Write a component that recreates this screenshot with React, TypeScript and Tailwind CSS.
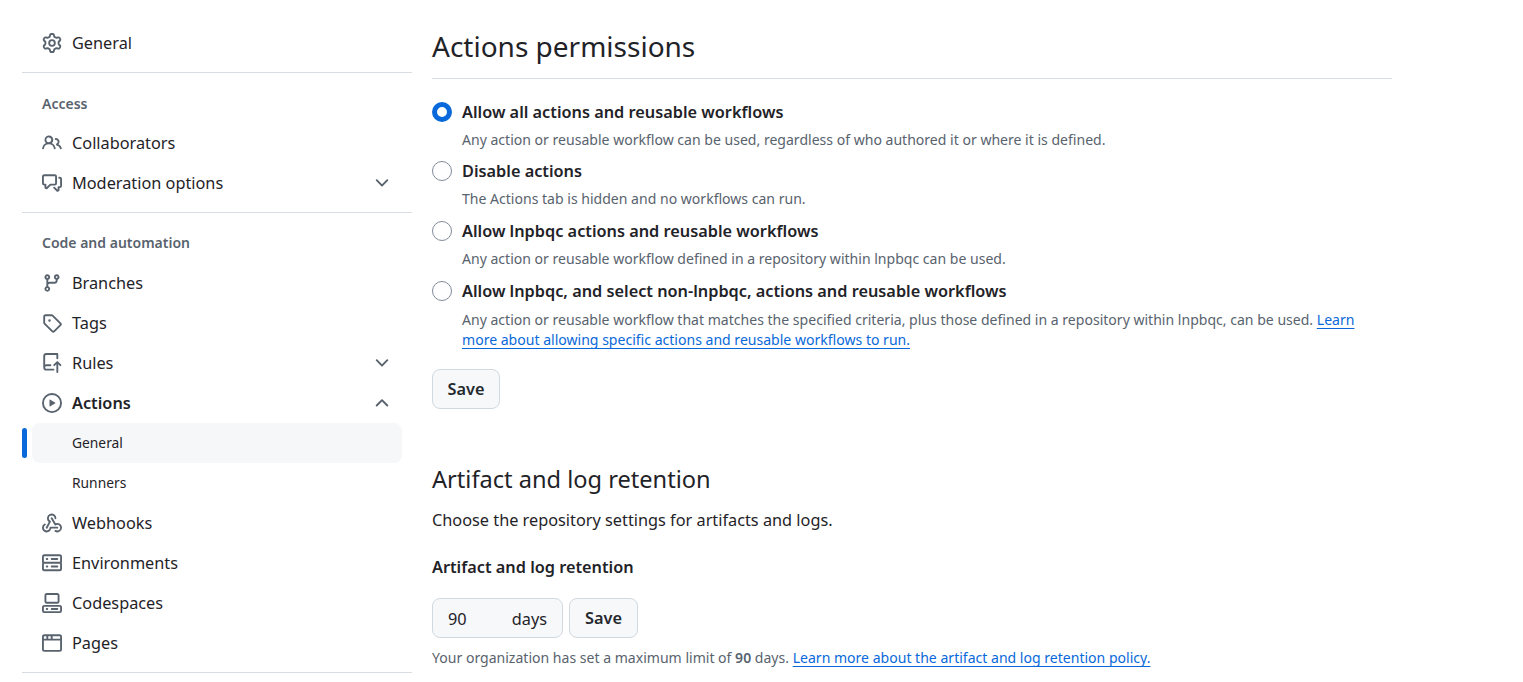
import type { ReactNode } from "react";

// octicons, 16px grid drawn at 20px
const icons = {
  gear: "M8 0a8.2 8.2 0 0 1 .701.031C9.444.095 9.99.645 10.16 1.29l.288 1.107c.018.066.079.158.212.224.231.114.454.243.668.386.123.082.233.09.299.071l1.103-.303c.644-.176 1.392.021 1.82.63.27.385.506.792.704 1.218.315.675.111 1.422-.364 1.891l-.814.806c-.049.048-.098.147-.088.294.016.257.016.515 0 .772-.01.147.038.246.088.294l.814.806c.475.469.679 1.216.364 1.891a7.977 7.977 0 0 1-.704 1.217c-.428.61-1.176.807-1.82.63l-1.102-.302c-.067-.019-.177-.011-.3.071a5.909 5.909 0 0 1-.668.386c-.133.066-.194.158-.211.224l-.29 1.106c-.168.646-.715 1.196-1.458 1.26a8.006 8.006 0 0 1-1.402 0c-.743-.064-1.289-.614-1.458-1.26l-.289-1.106c-.018-.066-.079-.158-.212-.224a5.738 5.738 0 0 1-.668-.386c-.123-.082-.233-.09-.299-.071l-1.103.303c-.644.176-1.392-.021-1.82-.63a8.12 8.12 0 0 1-.704-1.218c-.315-.675-.111-1.422.363-1.891l.815-.806c.05-.048.098-.147.088-.294a6.214 6.214 0 0 1 0-.772c.01-.147-.038-.246-.088-.294l-.815-.806C.635 6.045.431 5.298.746 4.623a7.92 7.92 0 0 1 .704-1.217c.428-.61 1.176-.807 1.82-.63l1.102.302c.067.019.177.011.3-.071.214-.143.437-.272.668-.386.133-.066.194-.158.211-.224l.29-1.106C6.009.645 6.556.095 7.299.03 7.53.01 7.764 0 8 0Zm-.571 1.525c-.036.003-.108.036-.137.146l-.289 1.105c-.147.561-.549.967-.998 1.189-.173.086-.34.183-.5.29-.417.278-.97.423-1.529.27l-1.103-.303c-.109-.03-.175.016-.195.045-.22.312-.412.644-.573.99-.014.031-.021.11.059.19l.815.806c.411.406.562.957.53 1.456a4.709 4.709 0 0 0 0 .582c.032.499-.119 1.05-.53 1.456l-.815.806c-.081.08-.073.159-.059.19.162.346.353.677.573.989.02.03.085.076.195.046l1.102-.303c.56-.153 1.113-.008 1.53.27.161.107.328.204.501.29.447.222.85.629.997 1.189l.289 1.105c.029.109.101.143.137.146a6.6 6.6 0 0 0 1.142 0c.036-.003.108-.036.137-.146l.289-1.105c.147-.561.549-.967.998-1.189.173-.086.34-.183.5-.29.417-.278.97-.423 1.529-.27l1.103.303c.109.029.175-.016.195-.045.22-.313.411-.644.573-.99.014-.031.021-.11-.059-.19l-.815-.806c-.411-.406-.562-.957-.53-1.456a4.709 4.709 0 0 0 0-.582c-.032-.499.119-1.05.53-1.456l.815-.806c.081-.08.073-.159.059-.19a6.464 6.464 0 0 0-.573-.989c-.02-.03-.085-.076-.195-.046l-1.102.303c-.56.153-1.113.008-1.53-.27a4.44 4.44 0 0 0-.501-.29c-.447-.222-.85-.629-.997-1.189l-.289-1.105c-.029-.11-.101-.143-.137-.146a6.6 6.6 0 0 0-1.142 0ZM11 8a3 3 0 1 1-6 0 3 3 0 0 1 6 0ZM9.5 8a1.5 1.5 0 1 0-3.001.001A1.5 1.5 0 0 0 9.5 8Z",
  people: "M2 5.5a3.5 3.5 0 1 1 5.898 2.549 5.508 5.508 0 0 1 3.034 4.084.75.75 0 1 1-1.482.235 4 4 0 0 0-7.9 0 .75.75 0 0 1-1.482-.236A5.507 5.507 0 0 1 3.102 8.05 3.493 3.493 0 0 1 2 5.5ZM11 4a3.001 3.001 0 0 1 2.22 5.018 5.01 5.01 0 0 1 2.56 3.012.749.749 0 0 1-.885.954.752.752 0 0 1-.549-.514 3.507 3.507 0 0 0-2.522-2.372.75.75 0 0 1-.574-.73v-.352a.75.75 0 0 1 .416-.672A1.5 1.5 0 0 0 11 5.5.75.75 0 0 1 11 4Zm-5.5-.5a2 2 0 1 0-.001 3.999A2 2 0 0 0 5.5 3.5Z",
  discussion: "M1.75 1h8.5c.966 0 1.75.784 1.75 1.75v5.5A1.75 1.75 0 0 1 10.25 10H7.061l-2.574 2.573A1.458 1.458 0 0 1 2 11.543V10h-.25A1.75 1.75 0 0 1 0 8.25v-5.5C0 1.784.784 1 1.75 1ZM1.5 2.75v5.5c0 .138.112.25.25.25h1a.75.75 0 0 1 .75.75v2.19l2.72-2.72a.749.749 0 0 1 .53-.22h3.5a.25.25 0 0 0 .25-.25v-5.5a.25.25 0 0 0-.25-.25h-8.5a.25.25 0 0 0-.25.25Zm13 2a.25.25 0 0 0-.25-.25h-.5a.75.75 0 0 1 0-1.5h.5c.966 0 1.75.784 1.75 1.75v5.5A1.75 1.75 0 0 1 14.25 12H14v1.543a1.458 1.458 0 0 1-2.487 1.03L9.22 12.28a.749.749 0 0 1 .326-1.275.749.749 0 0 1 .734.215l2.22 2.22v-2.19a.75.75 0 0 1 .75-.75h1a.25.25 0 0 0 .25-.25Z",
  branch: "M9.5 3.25a2.25 2.25 0 1 1 3 2.122V6A2.5 2.5 0 0 1 10 8.5H6a1 1 0 0 0-1 1v1.128a2.251 2.251 0 1 1-1.5 0V5.372a2.25 2.25 0 1 1 1.5 0v1.836A2.493 2.493 0 0 1 6 7h4a1 1 0 0 0 1-1v-.628A2.25 2.25 0 0 1 9.5 3.25Zm-6 0a.75.75 0 1 0 1.5 0 .75.75 0 0 0-1.5 0Zm8.25-.75a.75.75 0 1 0 0 1.5.75.75 0 0 0 0-1.5ZM4.25 12a.75.75 0 1 0 0 1.5.75.75 0 0 0 0-1.5Z",
  tag: "M1 7.775V2.75C1 1.784 1.784 1 2.75 1h5.025c.464 0 .91.184 1.238.513l6.25 6.25a1.75 1.75 0 0 1 0 2.474l-5.026 5.026a1.75 1.75 0 0 1-2.474 0l-6.25-6.25A1.752 1.752 0 0 1 1 7.775Zm1.5 0c0 .066.026.13.073.177l6.25 6.25a.25.25 0 0 0 .354 0l5.025-5.025a.25.25 0 0 0 0-.354l-6.25-6.25a.25.25 0 0 0-.177-.073H2.75a.25.25 0 0 0-.25.25ZM6 5a1 1 0 1 1 0 2 1 1 0 0 1 0-2Z",
  repoPush: "M1 2.5A2.5 2.5 0 0 1 3.5 0h8.75a.75.75 0 0 1 .75.75v3.5a.75.75 0 0 1-1.5 0V1.5h-8a1 1 0 0 0-1 1v6.708A2.493 2.493 0 0 1 3.5 9h3.25a.75.75 0 0 1 0 1.5H3.5a1 1 0 0 0 0 2h5.75a.75.75 0 0 1 0 1.5H3.5A2.5 2.5 0 0 1 1 11.5Zm13.23 7.79h-.001l-1.224-1.224v6.184a.75.75 0 0 1-1.5 0V9.066L10.28 10.29a.75.75 0 0 1-1.06-1.061l2.505-2.504a.75.75 0 0 1 1.06 0L15.29 9.23a.751.751 0 0 1-.018 1.042.751.751 0 0 1-1.042.018Z",
  play: "M8 0a8 8 0 1 1 0 16A8 8 0 0 1 8 0ZM1.5 8a6.5 6.5 0 1 0 13 0 6.5 6.5 0 0 0-13 0Zm4.879-2.773 4.264 2.559a.25.25 0 0 1 0 .428l-4.264 2.559A.25.25 0 0 1 6 10.559V5.442a.25.25 0 0 1 .379-.215Z",
  webhook: "M5.5 4.25a2.25 2.25 0 0 1 4.5 0 .75.75 0 0 0 1.5 0 3.75 3.75 0 1 0-6.14 2.889l-2.272 4.258a.75.75 0 0 0 1.324.706L7 7.25a.75.75 0 0 0-.309-1.015A2.25 2.25 0 0 1 5.5 4.25Z M7.364 3.607a.75.75 0 0 1 1.03.257l2.608 4.349a3.75 3.75 0 1 1-.628 6.785.75.75 0 0 1 .752-1.299 2.25 2.25 0 1 0-.033-3.88.75.75 0 0 1-1.03-.256L7.107 4.636a.75.75 0 0 1 .257-1.03Z M2.9 8.776A.75.75 0 0 1 2.625 9.8 2.25 2.25 0 1 0 6 11.75a.75.75 0 0 1 .75-.751h5.5a.75.75 0 0 1 0 1.5H7.425a3.751 3.751 0 1 1-5.55-3.998.75.75 0 0 1 1.024.274Z",
  server: "M1.75 1h12.5c.966 0 1.75.784 1.75 1.75v4c0 .372-.116.717-.314 1 .198.283.314.628.314 1v4a1.75 1.75 0 0 1-1.75 1.75H1.75A1.75 1.75 0 0 1 0 13.25v-4c0-.372.116-.717.314-1a1.739 1.739 0 0 1-.314-1v-4C0 1.784.784 1 1.75 1ZM1.5 2.75v4c0 .138.112.25.25.25h12.5a.25.25 0 0 0 .25-.25v-4a.25.25 0 0 0-.25-.25H1.75a.25.25 0 0 0-.25.25Zm.25 5.75a.25.25 0 0 0-.25.25v4c0 .138.112.25.25.25h12.5a.25.25 0 0 0 .25-.25v-4a.25.25 0 0 0-.25-.25ZM7 4.75A.75.75 0 0 1 7.75 4h4.5a.75.75 0 0 1 0 1.5h-4.5A.75.75 0 0 1 7 4.75ZM7.75 10h4.5a.75.75 0 0 1 0 1.5h-4.5a.75.75 0 0 1 0-1.5ZM3 4.75A.75.75 0 0 1 3.75 4h.5a.75.75 0 0 1 0 1.5h-.5A.75.75 0 0 1 3 4.75ZM3.75 10h.5a.75.75 0 0 1 0 1.5h-.5a.75.75 0 0 1 0-1.5Z",
  codespaces: "M0 11.25c0-.966.784-1.75 1.75-1.75h12.5c.966 0 1.75.784 1.75 1.75v3A1.75 1.75 0 0 1 14.25 16H1.75A1.75 1.75 0 0 1 0 14.25Zm2-9.5C2 .784 2.784 0 3.75 0h8.5C13.216 0 14 .784 14 1.75v5a1.75 1.75 0 0 1-1.75 1.75h-8.5A1.75 1.75 0 0 1 2 6.75Zm1.75-.25a.25.25 0 0 0-.25.25v5c0 .138.112.25.25.25h8.5a.25.25 0 0 0 .25-.25v-5a.25.25 0 0 0-.25-.25Zm-2 9.5a.25.25 0 0 0-.25.25v3c0 .138.112.25.25.25h12.5a.25.25 0 0 0 .25-.25v-3a.25.25 0 0 0-.25-.25Z M7 12.75a.75.75 0 0 1 .75-.75h4.5a.75.75 0 0 1 0 1.5h-4.5a.75.75 0 0 1-.75-.75Zm-4 0a.75.75 0 0 1 .75-.75h.5a.75.75 0 0 1 0 1.5h-.5a.75.75 0 0 1-.75-.75Z",
  browser: "M0 2.75C0 1.784.784 1 1.75 1h12.5c.966 0 1.75.784 1.75 1.75v10.5A1.75 1.75 0 0 1 14.25 15H1.75A1.75 1.75 0 0 1 0 13.25ZM14.5 6h-13v7.25c0 .138.112.25.25.25h12.5a.25.25 0 0 0 .25-.25Zm-6-3.5v2h6V2.75a.25.25 0 0 0-.25-.25ZM5 2.5v2h2v-2Zm-3.25 0a.25.25 0 0 0-.25.25V4.5h2v-2Z",
  chevronDown: "M12.78 5.22a.749.749 0 0 1 0 1.06l-4.25 4.25a.749.749 0 0 1-1.06 0L3.22 6.28a.749.749 0 1 1 1.06-1.06L8 8.939l3.72-3.719a.749.749 0 0 1 1.06 0Z",
  chevronUp: "M3.22 10.53a.749.749 0 0 1 0-1.06l4.25-4.25a.749.749 0 0 1 1.06 0l4.25 4.25a.749.749 0 1 1-1.06 1.06L8 6.811 4.28 10.53a.749.749 0 0 1-1.06 0Z",
};

const Icon = ({ name }: { name: keyof typeof icons }) => (
  <svg width="20" height="20" viewBox="0 0 16 16" fill="currentColor" className="shrink-0 text-[#59636e]">
    <path d={icons[name]} />
  </svg>
);

const NavItem = ({ icon, label, chevron, bold }: { icon: keyof typeof icons; label: string; chevron?: "chevronUp" | "chevronDown"; bold?: boolean }) => (
  <div className="flex h-10 items-center gap-[10px] px-[20px]">
    <Icon name={icon} />
    <span className={`flex-1 text-[16.3px] text-[#1f2328] ${bold ? "font-semibold" : ""}`}>{label}</span>
    {chevron && <Icon name={chevron} />}
  </div>
);

const SubItem = ({ label, active }: { label: string; active?: boolean }) => (
  <div className="relative h-10">
    {active && <span className="absolute left-0 top-[5px] h-[30px] w-[5px] rounded-full bg-[#0969da]" />}
    <div className={`mx-[10px] flex h-10 items-center rounded-lg px-[40px] text-[13.8px] text-[#1f2328] ${active ? "bg-[#f6f7f8]" : ""}`}>
      {label}
    </div>
  </div>
);

const Group = ({ label }: { label: string }) => (
  <div className="flex h-10 items-center px-[20px] text-[14px] font-semibold text-[#59636e]">{label}</div>
);

const Divider = () => <div className="mt-[9px] border-t border-[#d8dee4]" />;

const Radio = ({ checked, label, children, wrapped }: { checked?: boolean; label: string; children: ReactNode; wrapped?: boolean }) => (
  <div className={`flex gap-[10px] ${checked ? "-mb-px pt-px" : ""}`}>
    <span className={`mt-[2px] size-5 shrink-0 rounded-full ${checked ? "border-[5px] border-[#0969da]" : "border border-[#818b98]"}`} />
    <div>
      <div className="h-[25px] text-[16.3px] leading-[25px] font-semibold text-[#1f2328]">{label}</div>
      <div className={`text-[14.06px] leading-5 text-[#59636e] ${wrapped ? "mt-[6px]" : "mt-[5px]"}`}>{children}</div>
    </div>
  </div>
);

const Link = ({ children }: { children: ReactNode }) => (
  <a className="text-[#0969da] underline underline-offset-[3px]">{children}</a>
);

const Button = ({ className }: { className: string }) => (
  <button className={`h-10 rounded-lg border border-[#d1d9e0] bg-[#f6f8fa] text-[16.3px] font-semibold text-[#25292e] ${className}`}>
    Save
  </button>
);

export default function App() {
  return (
    <div className="flex h-[682px] gap-5 overflow-hidden bg-white pl-[22px] font-['Noto_Sans',sans-serif]">
      <nav className="w-[390px] shrink-0 pt-[23px]">
        <NavItem icon="gear" label="General" />
        <Divider />
        <div className="mt-[10px]">
          <Group label="Access" />
        </div>
        <NavItem icon="people" label="Collaborators" />
        <NavItem icon="discussion" label="Moderation options" chevron="chevronDown" />
        <Divider />
        <div className="mt-[9px] mb-px">
          <Group label="Code and automation" />
        </div>
        <NavItem icon="branch" label="Branches" />
        <NavItem icon="tag" label="Tags" />
        <NavItem icon="repoPush" label="Rules" chevron="chevronDown" />
        <NavItem icon="play" label="Actions" chevron="chevronUp" bold />
        <SubItem label="General" active />
        <SubItem label="Runners" />
        <NavItem icon="webhook" label="Webhooks" />
        <NavItem icon="server" label="Environments" />
        <NavItem icon="codespaces" label="Codespaces" />
        <NavItem icon="browser" label="Pages" />
        <Divider />
      </nav>
      <main className="w-[960px] shrink-0 pt-[26px]">
        <h2 className="border-b border-[#d8dee4] pb-[11px] text-[28px] leading-[41px] text-[#1f2328]">Actions permissions</h2>
        <div className="mt-5 flex flex-col gap-[10px]">
          <Radio checked label="Allow all actions and reusable workflows">
            Any action or reusable workflow can be used, regardless of who authored it or where it is defined.
          </Radio>
          <Radio label="Disable actions">The Actions tab is hidden and no workflows can run.</Radio>
          <Radio label="Allow lnpbqc actions and reusable workflows">
            Any action or reusable workflow defined in a repository within lnpbqc can be used.
          </Radio>
          <Radio wrapped label="Allow lnpbqc, and select non-lnpbqc, actions and reusable workflows">
            Any action or reusable workflow that matches the specified criteria, plus those defined in a repository within lnpbqc, can be used.{" "}
            <Link>Learn more about allowing specific actions and reusable workflows to run.</Link>
          </Radio>
        </div>
        <Button className="mt-[19px] w-[68px]" />
        <h3 className="mt-[50px] text-[23.6px] leading-10 text-[#1f2328]">Artifact and log retention</h3>
        <p className="mt-[10px] text-[16.3px] leading-[22px] text-[#1f2328]">Choose the repository settings for artifacts and logs.</p>
        <div className="mt-[25px] text-[16.3px] leading-[22px] font-semibold text-[#1f2328]">Artifact and log retention</div>
        <div className="mt-[20px] flex gap-[6px]">
          <div className="flex h-10 w-[131px] items-center justify-between rounded-lg border border-[#d1d9e0] bg-[#f6f8fa] px-[15px] pt-[2px] text-[16.3px] text-[#1f2328]">
            <span>90</span>
            <span>days</span>
          </div>
          <Button className="w-[69px]" />
        </div>
        <p className="mt-[10px] text-[14.06px] leading-5 text-[#59636e]">
          Your organization has set a maximum limit of <span className="font-semibold">90</span> days. <Link>Learn more about the artifact and log retention policy.</Link>
        </p>
      </main>
    </div>
  );
}
